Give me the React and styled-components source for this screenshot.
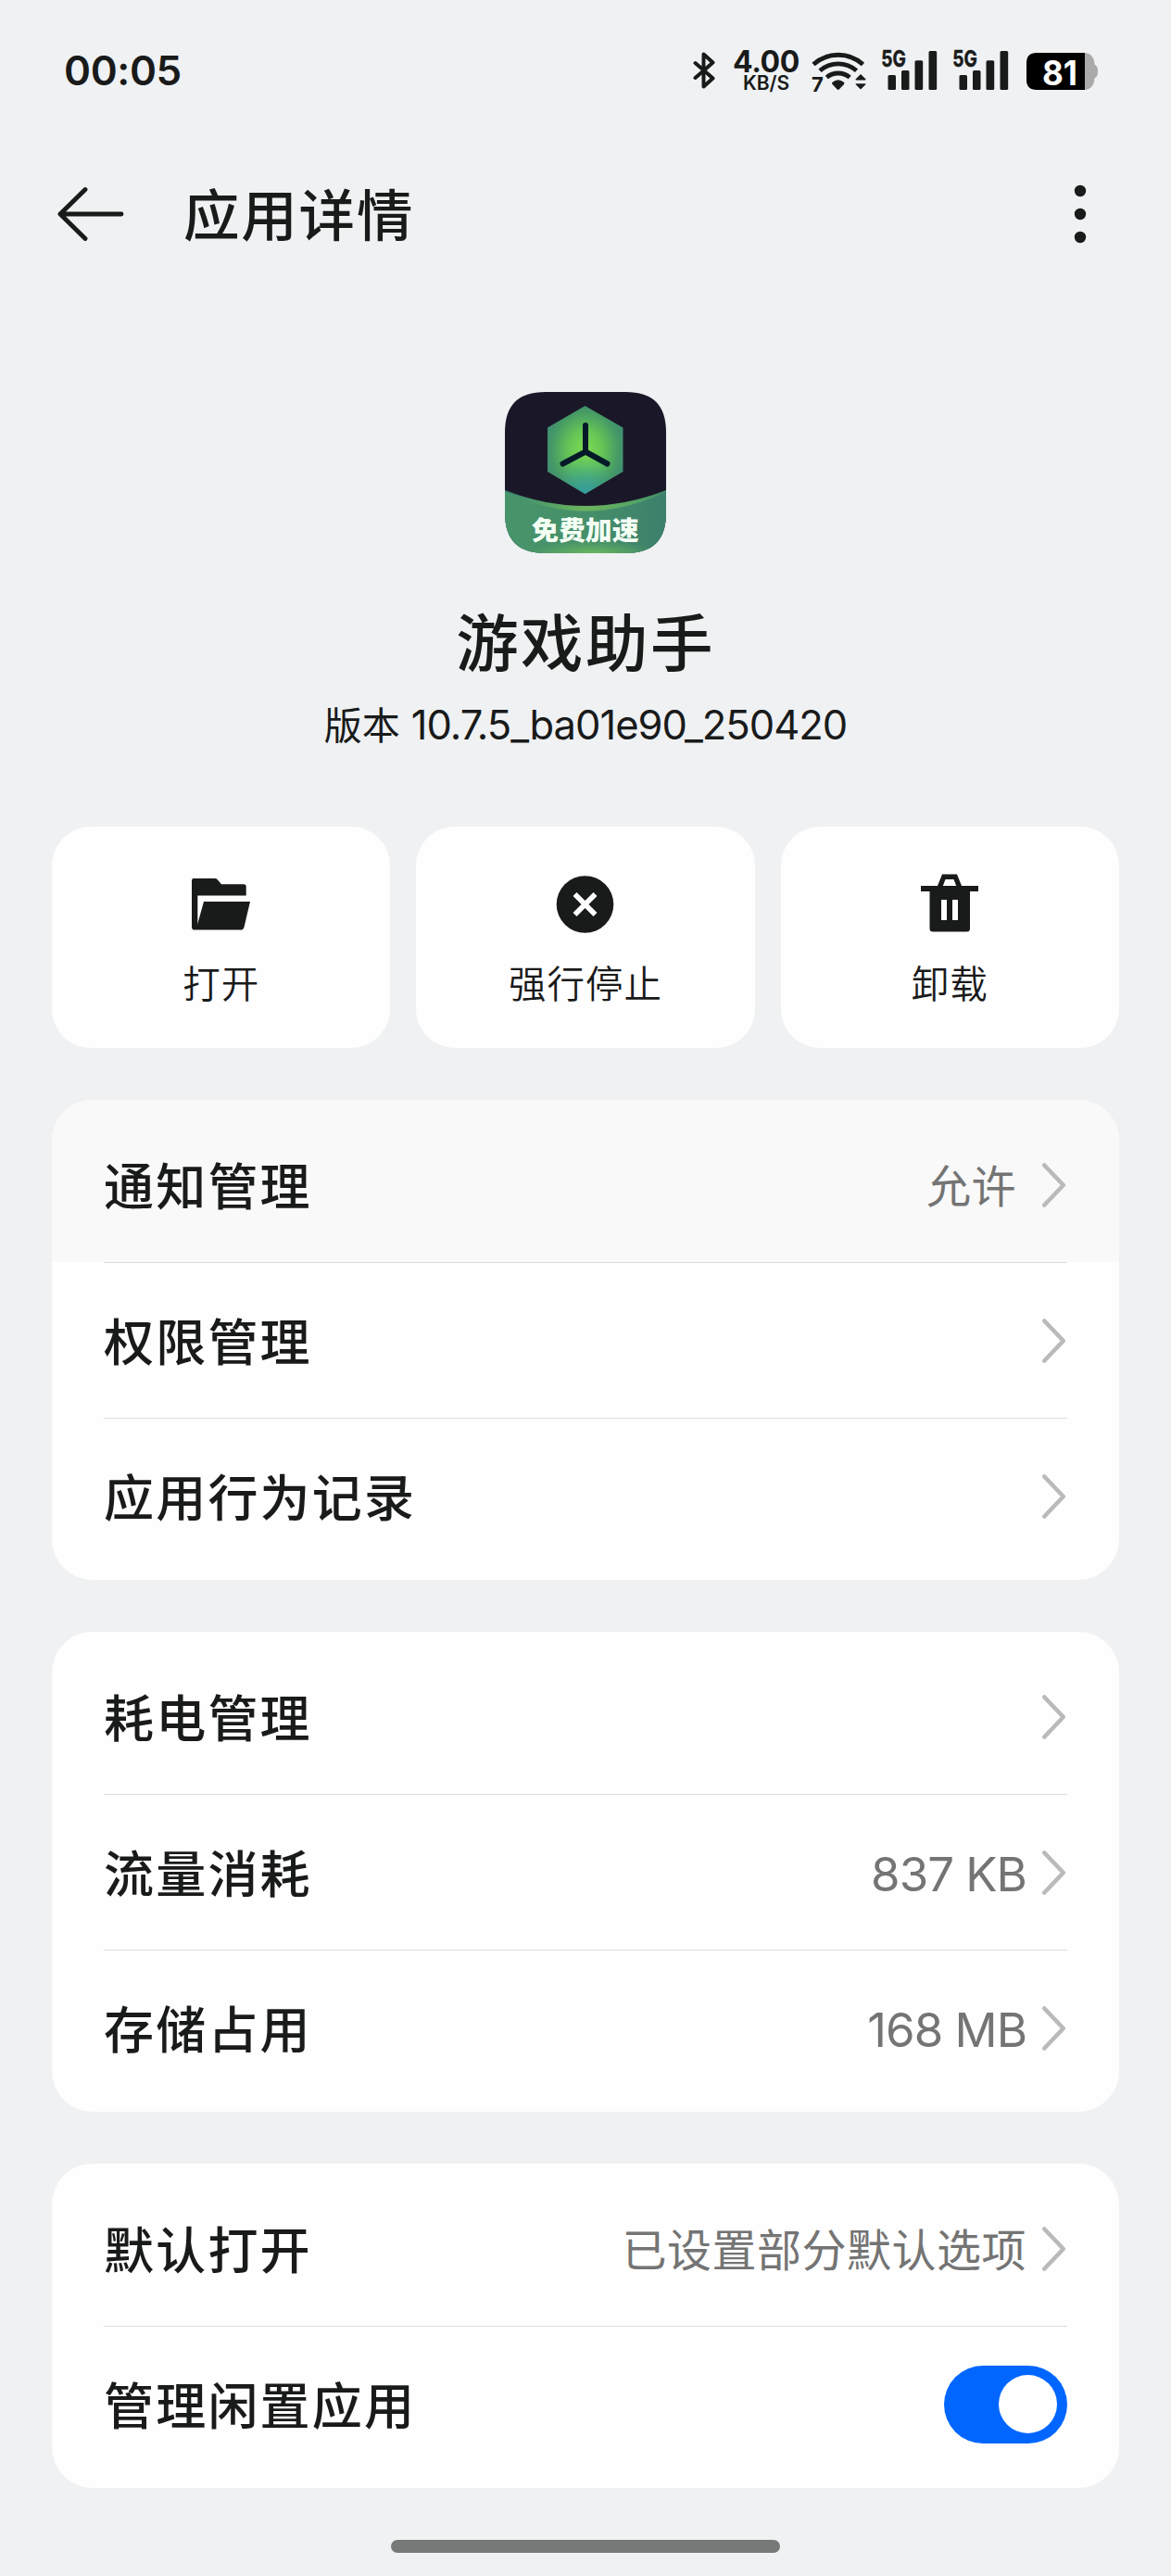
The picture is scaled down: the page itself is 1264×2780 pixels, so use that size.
import React from 'react';
import styled, { createGlobalStyle } from 'styled-components';

const CJK = '"Noto Sans CJK SC", "Noto Sans", sans-serif';
const INTER = 'Inter, "Liberation Sans", sans-serif';
const INK = '#191a1a';

const GlobalStyle = createGlobalStyle`
  * { box-sizing: border-box; }
  body { margin: 0; background: #eff1f3; }
`;

const Screen = styled.div`
  width: 1264px;
  height: 2780px;
  display: flex;
  flex-direction: column;
  overflow: hidden;
  background: #eff1f3;
  color: ${INK};
  font-family: ${CJK};
`;

const StatusBar = styled.header`
  height: 154px;
  flex: none;
  display: flex;
  align-items: center;
  justify-content: space-between;
  padding: 0 79px 0 69px;
`;

const Clock = styled.time`
  font: 600 44px/60px ${INTER};
  letter-spacing: -0.4px;
  margin-top: -2px;
`;

const StatusIcons = styled.div`
  display: flex;
  align-items: center;
`;

const Icon = styled.svg`
  display: block;
  flex: none;
  overflow: visible;
  margin-left: ${(p) => p.$gap || 0}px;
`;

const Speed = styled.div`
  width: 74px;
  margin-left: 18px;
  display: flex;
  flex-direction: column;
  align-items: center;
  font-family: ${INTER};
`;

const SpeedValue = styled.span`
  font-size: 32px;
  font-weight: 650;
  line-height: 24px;
  letter-spacing: -0.4px;
`;

const SpeedUnit = styled.span`
  font-size: 21px;
  font-weight: 600;
  line-height: 20px;
  margin-top: 1px;
`;

const TitleBar = styled.nav`
  height: 154px;
  flex: none;
  display: flex;
  align-items: center;
  padding: 0 88px 0 60px;
`;

const Title = styled.h1`
  flex: 1;
  margin: -4px 0 0 62px;
  font-size: 60.5px;
  font-weight: 500;
  line-height: 80px;
  letter-spacing: 1.8px;
`;

const Hero = styled.section`
  height: 584px;
  flex: none;
  display: flex;
  flex-direction: column;
  align-items: center;
  padding-top: 115px;
`;

const AppName = styled.h2`
  margin: 48px 0 0;
  font-size: 67.5px;
  font-weight: 500;
  line-height: 90px;
  letter-spacing: 2.4px;
`;

const Version = styled.p`
  margin: 17px 0 0;
  display: flex;
  align-items: baseline;
  gap: 12px;
  line-height: 56px;
`;

const VersionWord = styled.span`
  font-size: 41px;
  font-weight: 370;
`;

const VersionNumber = styled.span`
  font-family: ${INTER};
  font-size: 43.5px;
  font-weight: 390;
  letter-spacing: -1px;
`;

const Actions = styled.section`
  flex: none;
  display: grid;
  grid-template-columns: repeat(3, 1fr);
  gap: 28px;
  padding: 0 56px;
`;

const ActionButton = styled.button`
  height: 239px;
  border: 0;
  border-radius: 42px;
  background: #fefefe;
  color: ${INK};
  display: flex;
  flex-direction: column;
  align-items: center;
  padding: 51px 0 0;
  font-family: ${CJK};
`;

const ActionLabel = styled.span`
  margin-top: 21px;
  font-size: 40.5px;
  font-weight: 350;
  line-height: 60px;
  letter-spacing: 1px;
`;

const Card = styled.section`
  flex: none;
  margin: 56px 56px 0;
  border-radius: 44px;
  background: #fefefe;
  overflow: hidden;
`;

const Row = styled.div`
  display: flex;
  align-items: center;
  height: ${(p) => 168 + (p.$first || p.$last ? 7 : 0)}px;
  padding: ${(p) => (p.$first ? 7 : 0)}px 56px ${(p) => (p.$last ? 7 : 0)}px;
  background: ${(p) => (p.$pressed ? '#f9f9f9' : 'transparent')};
`;

const RowBody = styled.div`
  flex: 1;
  height: 168px;
  display: flex;
  align-items: center;
  border-top: 1px solid ${(p) => (p.$divided ? '#dcdddd' : 'transparent')};
`;

const Label = styled.span`
  flex: 1;
  font-size: 54px;
  font-weight: 500;
  line-height: 76px;
  letter-spacing: 2.2px;
  margin-top: -2px;
`;

const Value = styled.span`
  color: #747474;
  font-family: ${(p) => (p.$latin ? INTER : CJK)};
  font-size: ${(p) => (p.$latin ? 51 : 48)}px;
  font-weight: ${(p) => (p.$latin ? 390 : 370)};
  line-height: 70px;
  letter-spacing: ${(p) => (p.$latin ? -1 : 0.5)}px;
  margin-top: ${(p) => (p.$latin ? 4 : -4)}px;
  margin-right: ${(p) => (p.$wide ? 25 : 14)}px;
`;

const Toggle = styled.span`
  width: 133px;
  height: 84px;
  border-radius: 42px;
  background: #0066ff;
  display: flex;
  align-items: center;
  justify-content: flex-end;
  padding-right: 11px;
`;

const Knob = styled.span`
  width: 63px;
  height: 63px;
  border-radius: 50%;
  background: #fff;
`;

const HomeBar = styled.div`
  flex: none;
  width: 420px;
  height: 14px;
  margin: 56px auto 0;
  border-radius: 7px;
  background: #777979;
`;

const Bluetooth = () => (
  <Icon width="24" height="46" viewBox="0 0 24 46" fill="none" stroke={INK} strokeWidth="4" strokeLinejoin="round" strokeLinecap="round">
    <path d="M2.5 14 L21.500 30.500 L11.500 39.500 V4.500 L21.500 13.500 L2.5 30" />
  </Icon>
);

const Wifi = () => (
  <Icon $gap={12} width="60" height="46" viewBox="0 0 60 46">
    <g fill="none" stroke={INK} strokeWidth="4.8">
      <path d="M2 15.5 A40 40 0 0 1 55.500 15.500" />
      <path d="M9 22.300 A30 30 0 0 1 48.500 22.300" />
      <path d="M16.300 29.500 A19.500 19.500 0 0 1 41.200 29.500" />
    </g>
    <path d="M22.5 34.800 Q28.700 29.500 35 34.800 Q36 36 35 37 L29.700 42.500 Q28.700 43.300 27.700 42.500 L22.500 37 Q21.500 36 22.500 34.800 Z" fill={INK} />
    <path d="M53 26 L58.600 31.500 Q58.600 32.400 57.500 32.400 H48.500 Q47.500 32.400 47.500 31.500 Z M53 42.600 L58.600 37 Q58.600 36.200 57.500 36.200 H48.500 Q47.500 36.200 47.500 37 Z" fill={INK} />
    <text x="0" y="45" fill={INK} fontFamily="Inter" fontWeight="700" fontSize="22">7</text>
  </Icon>
);

const Signal = ({ gap }) => (
  <Icon $gap={gap} width="61" height="46" viewBox="0 0 61 46" fill={INK}>
    <rect x="7.500" y="27" width="8.500" height="16" rx="1.500" />
    <rect x="22" y="22" width="8.500" height="21" rx="1.500" />
    <rect x="36.500" y="11.300" width="8.700" height="31.700" rx="1.500" />
    <rect x="51.500" y="1" width="8.700" height="42" rx="1.500" />
    <text x="0.300" y="18.300" fontFamily="Inter" fontWeight="700" fontSize="24.500" textLength="26.500" lengthAdjust="spacingAndGlyphs" stroke={INK} strokeWidth="0.600">5G</text>
  </Icon>
);

const Battery = () => (
  <Icon $gap={18} width="78" height="46" viewBox="0 0 78 46">
    <path d="M64 3 Q72.500 3.500 74.300 13 L74.300 15.500 Q78 17 78 22 V24 Q78 29 74.300 30.500 V33 Q72.500 42.500 64 43 Z" fill="#aaaaab" />
    <path d="M12 3 H64 V43 H12 Q1 43 1 32 V14 Q1 3 12 3 Z" fill="#000" />
    <text x="18" y="37.500" fill="#fff" fontFamily="Inter" fontWeight="650" fontSize="36.500" textLength="38" lengthAdjust="spacingAndGlyphs">81</text>
  </Icon>
);

const BackArrow = () => (
  <Icon width="76" height="62" viewBox="0 0 76 62" fill="none" stroke={INK} strokeWidth="4.900" strokeLinecap="round" strokeLinejoin="round">
    <path d="M71 31 H5 M32 4.500 L5 31 L32 57.500" />
  </Icon>
);

const MoreDots = () => (
  <Icon width="20" height="64" viewBox="0 0 20 64" fill={INK}>
    <circle cx="10" cy="7" r="6.200" />
    <circle cx="10" cy="32" r="6.200" />
    <circle cx="10" cy="57" r="6.200" />
  </Icon>
);

const AppIcon = () => (
  <Icon width="174" height="174" viewBox="0 0 174 174">
    <defs>
      <radialGradient id="hexGlow" cx="0.5" cy="0.5" r="0.55">
        <stop offset="0" stopColor="#7ddb50" />
        <stop offset="0.4" stopColor="#66c655" />
        <stop offset="0.8" stopColor="#459a66" />
        <stop offset="1" stopColor="#3f8d72" />
      </radialGradient>
      <radialGradient id="hexTeal" cx="0.5" cy="1" r="0.42">
        <stop offset="0" stopColor="#34a0a4" stopOpacity="0.9" />
        <stop offset="1" stopColor="#34a0a4" stopOpacity="0" />
      </radialGradient>
      <linearGradient id="banner" x1="0" x2="1" y1="0" y2="0">
        <stop offset="0" stopColor="#48946a" />
        <stop offset="0.5" stopColor="#45906a" />
        <stop offset="1" stopColor="#3d7f6c" />
      </linearGradient>
      <linearGradient id="rim" x1="0" x2="1" y1="0" y2="0">
        <stop offset="0" stopColor="#3a8a70" />
        <stop offset="0.5" stopColor="#6cb45e" />
        <stop offset="0.8" stopColor="#55a565" />
        <stop offset="1" stopColor="#3f8a6a" />
      </linearGradient>
      <radialGradient id="bottomGlow" cx="0.55" cy="1" r="0.4">
        <stop offset="0" stopColor="#6fc05c" stopOpacity="0.8" />
        <stop offset="1" stopColor="#6fc05c" stopOpacity="0" />
      </radialGradient>
      <clipPath id="tile">
        <path d="M44 0 H130 C160 0 174 14 174 44 V130 C174 160 160 174 130 174 H44 C14 174 0 160 0 130 V44 C0 14 14 0 44 0 Z" />
      </clipPath>
    </defs>
    <g clipPath="url(#tile)">
      <rect width="174" height="174" fill="#1a1828" />
      <path d="M0 106 Q87 140 174 106 V174 H0 Z" fill="url(#rim)" />
      <path d="M0 108 Q87 149 174 108 V174 H0 Z" fill="url(#banner)" />
      <rect y="140" width="174" height="34" fill="url(#bottomGlow)" />
    </g>
    <path d="M86.500 15 L127.500 38.500 V86 L86.500 110 L46 86 V38.500 Z" fill="url(#hexGlow)" />
    <path d="M86.500 15 L127.500 38.500 V86 L86.500 110 L46 86 V38.500 Z" fill="url(#hexTeal)" />
    <path d="M87 36 V64.500 M87 64.500 L62.500 77.500 M87 64.500 L110.500 77.500" stroke="#041a28" strokeWidth="6" strokeLinecap="round" fill="none" />
    <text x="29" y="159.500" fill="#f4fff4" fontFamily="Noto Sans CJK SC" fontWeight="900" fontSize="28.900">免费加速</text>
  </Icon>
);

const Folder = () => (
  <Icon width="66" height="66" viewBox="2 0 66 66" fill="currentColor">
    <path d="M4.500 5 H28 Q29.700 5 30.700 6.300 L35 11.300 H59 Q61.700 11.300 61.700 14 V23.500 H9.300 V54 L16 30 H66 L59.500 57.500 Q58.700 60.600 56 60.600 H6 Q3 60.600 3 57.500 V7.500 Q3 5 4.500 5 Z" />
  </Icon>
);

const Stop = () => (
  <Icon width="66" height="66" viewBox="0 0 66 66">
    <circle cx="32.500" cy="33" r="30.800" fill="currentColor" />
    <path d="M21.500 22 L43.500 44 M43.500 22 L21.500 44" stroke="#fefefe" strokeWidth="5.600" />
  </Icon>
);

const Trash = () => (
  <Icon width="66" height="66" viewBox="0 0 66 66">
    <path d="M2 13 H20 L25 0.500 H41 L46 13 H64 V19 H55 V59 Q55 62.500 51.500 62.500 H15 Q11.500 62.500 11.500 59 V19 H2 Z M28.500 6 L25.800 13 H40.200 L37.500 6 Z M24 28 V50 H30 V28 Z M36 28 V50 H42 V28 Z" fill="currentColor" fillRule="evenodd" />
  </Icon>
);

const Chevron = () => (
  <Icon width="30" height="52" viewBox="0 0 30 52" fill="none" stroke="#bababa" strokeWidth="4.600" strokeLinecap="round" strokeLinejoin="round">
    <path d="M5.300 4.500 L25.800 26 L5.300 47.500" />
  </Icon>
);

const actions = [
  { label: '打开', icon: Folder },
  { label: '强行停止', icon: Stop },
  { label: '卸载', icon: Trash },
];

const groups = [
  [
    { label: '通知管理', value: '允许', wide: true, pressed: true },
    { label: '权限管理' },
    { label: '应用行为记录' },
  ],
  [
    { label: '耗电管理' },
    { label: '流量消耗', value: '837 KB', latin: true },
    { label: '存储占用', value: '168 MB', latin: true },
  ],
  [
    { label: '默认打开', value: '已设置部分默认选项' },
    { label: '管理闲置应用', toggle: true },
  ],
];

export default function App() {
  return (
    <Screen>
      <GlobalStyle />
      <StatusBar>
        <Clock>00:05</Clock>
        <StatusIcons>
          <Bluetooth />
          <Speed>
            <SpeedValue>4.00</SpeedValue>
            <SpeedUnit>KB/S</SpeedUnit>
          </Speed>
          <Wifi />
          <Signal gap={15} />
          <Signal gap={16} />
          <Battery />
        </StatusIcons>
      </StatusBar>
      <TitleBar>
        <BackArrow />
        <Title>应用详情</Title>
        <MoreDots />
      </TitleBar>
      <Hero>
        <AppIcon />
        <AppName>游戏助手</AppName>
        <Version>
          <VersionWord>版本</VersionWord>
          <VersionNumber>10.7.5_ba01e90_250420</VersionNumber>
        </Version>
      </Hero>
      <Actions>
        {actions.map(({ label, icon: ActionIcon }) => (
          <ActionButton key={label}>
            <ActionIcon />
            <ActionLabel>{label}</ActionLabel>
          </ActionButton>
        ))}
      </Actions>
      {groups.map((rows, g) => (
        <Card key={g}>
          {rows.map((row, i) => (
            <Row key={row.label} $first={i === 0} $last={i === rows.length - 1} $pressed={row.pressed}>
              <RowBody $divided={i > 0}>
                <Label>{row.label}</Label>
                {row.value && (
                  <Value $latin={row.latin} $wide={row.wide}>{row.value}</Value>
                )}
                {row.toggle ? <Toggle><Knob /></Toggle> : <Chevron />}
              </RowBody>
            </Row>
          ))}
        </Card>
      ))}
      <HomeBar />
    </Screen>
  );
}
